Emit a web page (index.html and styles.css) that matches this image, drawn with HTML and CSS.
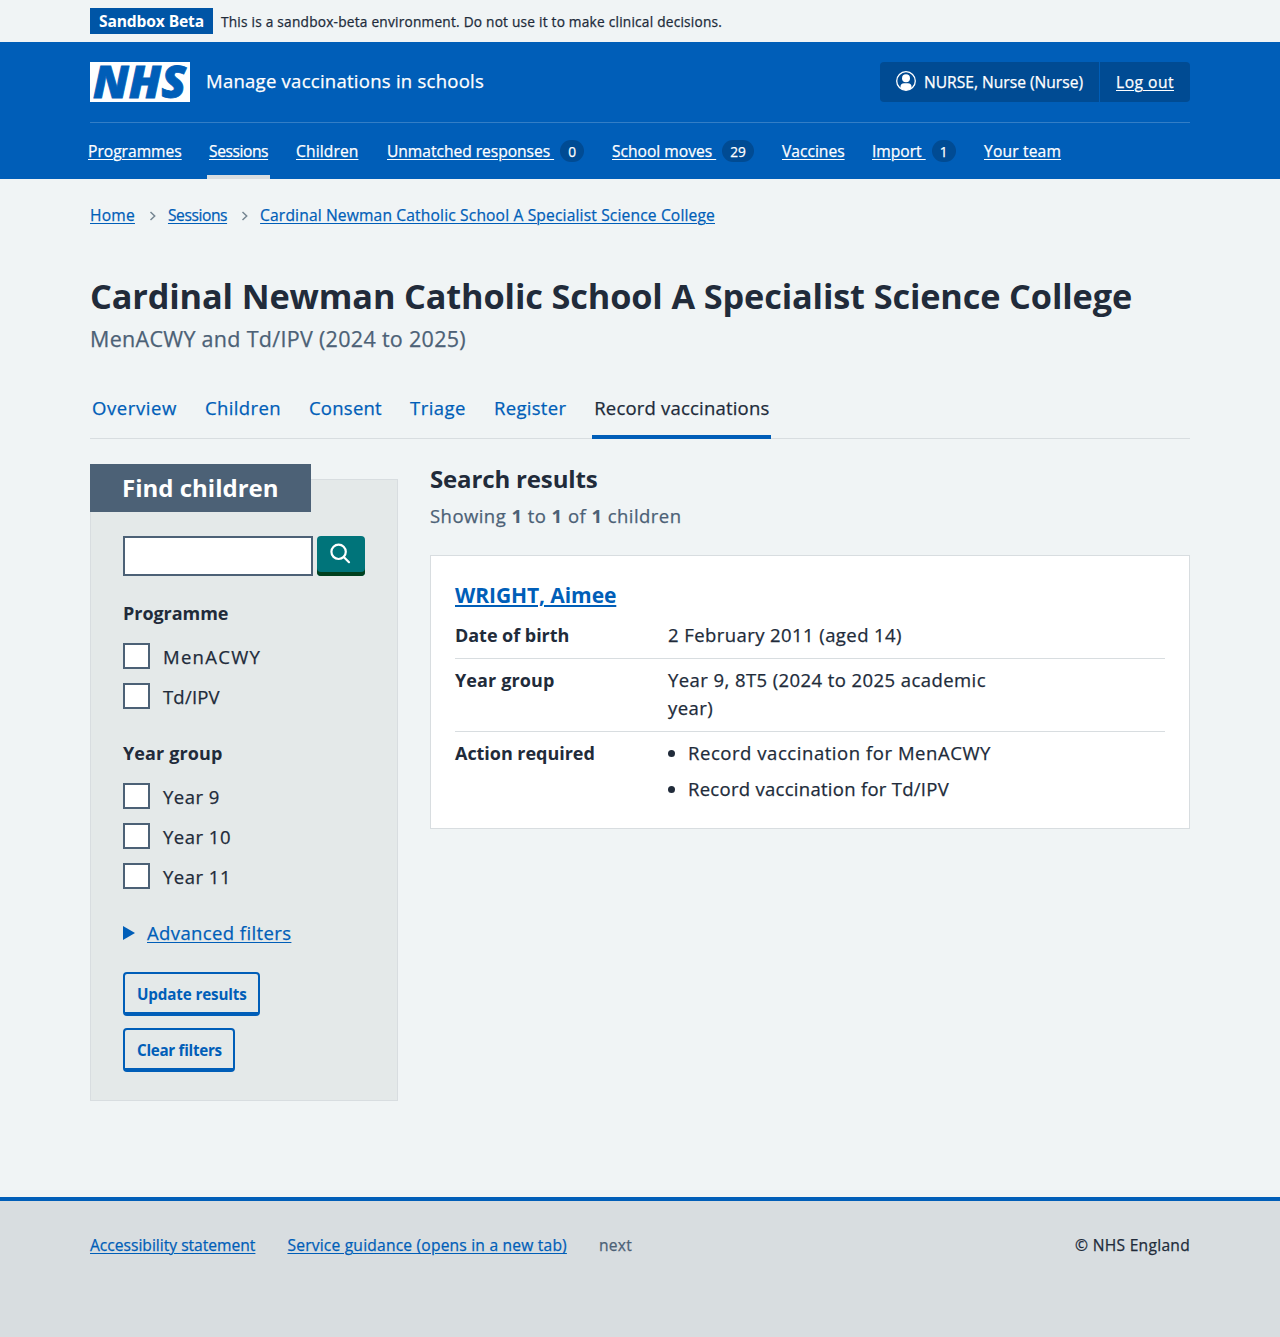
FILE: index.html
```html
<!DOCTYPE html>
<html lang="en">
<head>
<meta charset="utf-8">
<title>Record vaccinations – Manage vaccinations in schools</title>
<link rel="stylesheet" href="styles.css">
</head>
<body>
<div class="environment">
  <div class="container environment-inner">
    <strong class="environment-tag">Sandbox Beta</strong>
    <span class="environment-text">This is a sandbox-beta environment. Do not use it to make clinical decisions.</span>
  </div>
</div>
<header class="header">
  <div class="container">
    <div class="header-top">
      <svg class="logo" viewBox="0 0 100 40" role="img" aria-label="NHS">
        <rect width="100" height="40" fill="#fff"/>
        <text x="3" y="35.8" textLength="93" lengthAdjust="spacingAndGlyphs">NHS</text>
      </svg>
      <span class="service-name">Manage vaccinations in schools</span>
      <div class="account">
        <div class="account-item account-user">
          <svg class="user-icon" viewBox="0 0 20 20" aria-hidden="true">
            <circle cx="10" cy="10" r="9.3" fill="none" stroke="#fff" stroke-width="1.3"/>
            <circle cx="10" cy="7.3" r="4" fill="#fff"/>
            <path d="M4.5 17.3v-1.5a3.6 3.6 0 0 1 3.6-3.6h3.8a3.6 3.6 0 0 1 3.6 3.6v1.5A9 9 0 0 1 10 19.2a9 9 0 0 1-5.5-1.9Z" fill="#fff"/>
          </svg>
          <span>NURSE, Nurse (Nurse)</span>
        </div>
        <div class="account-item"><a class="logout" href="#">Log out</a></div>
      </div>
    </div>
    <nav class="nav">
      <div class="nav-item programmes"><a href="#">Programmes</a></div>
      <div class="nav-item current"><a href="#">Sessions</a></div>
      <div class="nav-item children"><a href="#">Children</a></div>
      <div class="nav-item unmatched"><a href="#">Unmatched responses&nbsp;</a><span class="count">0</span></div>
      <div class="nav-item moves"><a href="#">School moves&nbsp;</a><span class="count">29</span></div>
      <div class="nav-item vaccines"><a href="#">Vaccines</a></div>
      <div class="nav-item import"><a href="#">Import&nbsp;</a><span class="count">1</span></div>
      <div class="nav-item team"><a href="#">Your team</a></div>
    </nav>
  </div>
</header>
<div class="container page">
  <nav class="breadcrumb">
    <a class="crumb-home" href="#">Home</a>
    <svg class="chevron" viewBox="0 0 8 10" aria-hidden="true"><path d="M1.5 1 5.7 5 1.5 9"/></svg>
    <a class="crumb-sessions" href="#">Sessions</a>
    <svg class="chevron" viewBox="0 0 8 10" aria-hidden="true"><path d="M1.5 1 5.7 5 1.5 9"/></svg>
    <a class="crumb-school" href="#">Cardinal Newman Catholic School A Specialist Science College</a>
  </nav>
  <main>
    <h1>Cardinal Newman Catholic School A Specialist Science College</h1>
    <p class="caption">MenACWY and Td/IPV (2024 to 2025)</p>
    <nav class="tabs">
      <a class="tab-overview" href="#">Overview</a>
      <a class="tab-children" href="#">Children</a>
      <a class="tab-consent" href="#">Consent</a>
      <a class="tab-triage" href="#">Triage</a>
      <a class="tab-register" href="#">Register</a>
      <a class="selected" href="#">Record vaccinations</a>
    </nav>
    <div class="columns">
      <aside>
        <h2 class="filter-title">Find children</h2>
        <form class="filters">
          <div class="search">
            <input type="text" class="search-input" aria-label="Search">
            <button type="button" class="search-button" aria-label="Search">
              <svg viewBox="0 0 22 22" aria-hidden="true"><circle cx="9.6" cy="8.8" r="7.2"/><path d="m15 14.2 5 5"/></svg>
            </button>
          </div>
          <fieldset class="programme">
            <legend>Programme</legend>
            <label><input type="checkbox"><span class="menacwy">MenACWY</span></label>
            <label><input type="checkbox"><span class="tdipv">Td/IPV</span></label>
          </fieldset>
          <fieldset class="year-group">
            <legend>Year group</legend>
            <label><input type="checkbox"><span>Year 9</span></label>
            <label><input type="checkbox"><span>Year 10</span></label>
            <label><input type="checkbox"><span>Year 11</span></label>
          </fieldset>
          <a class="advanced" href="#"><i class="triangle"></i><span>Advanced filters</span></a>
          <button type="button" class="button">Update results</button>
          <button type="button" class="button clear">Clear filters</button>
        </form>
      </aside>
      <section class="results">
        <h2>Search results</h2>
        <p class="showing">Showing <b>1</b> to <b>1</b> of <b>1</b> children</p>
        <article class="card">
          <h3><a href="#">WRIGHT, Aimee</a></h3>
          <dl>
            <div class="row"><dt>Date of birth</dt><dd>2 February 2011 (aged 14)</dd></div>
            <div class="row"><dt class="short">Year group</dt><dd>Year 9, 8T5 (2024 to 2025 academic year)</dd></div>
            <div class="row"><dt>Action required</dt><dd><ul><li class="menacwy-action">Record vaccination for MenACWY</li><li>Record vaccination for Td/IPV</li></ul></dd></div>
          </dl>
        </article>
      </section>
    </div>
  </main>
</div>
<footer class="footer">
  <div class="container footer-inner">
    <a class="accessibility" href="#">Accessibility statement</a>
    <a class="guidance" href="#">Service guidance (opens in a new tab)</a>
    <span class="next">next</span>
    <span class="copyright">© NHS England</span>
  </div>
</footer>
</body>
</html>
```
FILE: styles.css
```css
* { box-sizing: border-box; }
body {
  margin: 0;
  background: #f0f4f5;
  color: #212b3a;
  font: 18.5px/28px "Open Sans", "Noto Sans", sans-serif;
  -webkit-text-stroke: .25px;
  white-space: nowrap;
}
.container { width: 1100px; margin: 0 auto; }
a { color: #005eb8; text-underline-offset: 2px; text-decoration-thickness: 1px; }
h1, h2, h3, p, dl, dd, ul { margin: 0; }
h1, h2, h3, dt, legend, strong, b, .button { -webkit-text-stroke: 0; }

/* Environment banner */
.environment-inner { height: 42px; display: flex; align-items: center; gap: 8px; }
.environment-tag { width: 123px; height: 26px; padding: 0 9px; background: #0055a6; color: #fff; font-size: 15.6px; line-height: 26px; letter-spacing: -.13px; }
.environment-text { font-size: 13.7px; line-height: 24px; letter-spacing: .22px; padding-top: 1px; }

/* Header */
.header { height: 137px; background: #005eb8; color: #fff; }
.header a { color: #fff; }
.header-top { height: 81px; padding-bottom: 1px; display: flex; align-items: center; border-bottom: 1px solid #337ec6; }
.logo { width: 100px; height: 40px; margin-right: 16px; overflow: visible; }
.logo text { font: italic 800 44px "Open Sans", sans-serif; fill: #005eb8; stroke: #005eb8; stroke-width: .8px; }
.service-name { position: relative; top: -1px; letter-spacing: .26px; }
.account { margin-left: auto; display: flex; height: 40px; border-radius: 4px; background: #004b93; font-size: 15.6px; line-height: 40px; }
.account-item { width: 90px; padding: 0 16px; }
.account-user { width: 220px; display: flex; align-items: center; gap: 8px; border-right: 1px solid #005eb8; }
.logout { letter-spacing: .5px; }
.user-icon { width: 20px; height: 20px; margin-top: -2px; flex: none; }
.nav { height: 56px; margin-left: -4px; display: flex; font-size: 15.6px; line-height: 56px; }
.nav-item { padding-left: 2px; display: flex; align-items: center; }
.nav-item a { line-height: 56px; }
.programmes { width: 121px; }
.children { width: 91px; letter-spacing: .12px; }
.unmatched { width: 225px; letter-spacing: -.03px; }
.moves { width: 170px; }
.vaccines { width: 90px; }
.import { width: 112px; }
.team { letter-spacing: .17px; }
.nav-item.current { width: 63px; margin-right: 24px; border-bottom: 4px solid #d8dde0; letter-spacing: -.42px; }
.current a { line-height: 52px; position: relative; top: 2px; }
.count { height: 22px; min-width: 24px; margin-left: 6px; padding: 0 8px; border-radius: 12px; background: #004b93; font-size: 13.7px; line-height: 23px; text-align: center; }

/* Page heading */
.page { height: 1018px; }
.breadcrumb { padding-top: 24px; height: 48px; display: flex; align-items: center; font-size: 15.6px; line-height: 24px; }
.crumb-home { letter-spacing: .22px; }
.crumb-sessions { letter-spacing: -.42px; }
.crumb-school { letter-spacing: .15px; }
.chevron { width: 8px; height: 10px; margin: 0 11px 0 14px; position: relative; top: 1px; fill: none; stroke: #768692; stroke-width: 1.5; }
h1 { margin-top: 47px; font-size: 34.3px; line-height: 44px; letter-spacing: -.14px; }
.caption { font-size: 21.5px; line-height: 32px; margin-top: 5px; color: #4c6176; letter-spacing: .3px; }
.tabs { margin-top: 24px; height: 60px; display: flex; border-bottom: 1px solid #d8dde0; line-height: 58px; }
.tabs a { height: 60px; padding: 0 2px; text-decoration: none; margin-right: 24px; }
.tab-overview { letter-spacing: .6px; }
.tab-children { letter-spacing: .37px; }
.tab-consent { letter-spacing: .25px; }
.tab-triage { letter-spacing: .48px; }
.tab-register { letter-spacing: .3px; }
.tabs .selected { color: #212b3a; border-bottom: 4px solid #005eb8; letter-spacing: .19px; }
.columns { margin-top: 25px; display: grid; grid-template-columns: 308px 760px; gap: 32px; align-items: start; }

/* Filters */
aside { position: relative; padding-top: 15px; }
.filter-title { position: absolute; left: 0; top: 0; width: 221px; height: 48px; padding-left: 32px; background: #4c6176; color: #fff; font-size: 24px; line-height: 48px; }
.filters { height: 622px; padding: 56px 32px 0; background: #e4e9e9; border: 1px solid #d8dde0; }
.search { display: flex; gap: 4px; }
.search-input { width: 190px; height: 40px; border: 2px solid #4c6176; background: #fff; }
.search-button { width: 48px; height: 40px; padding: 5px 12px 9px; border: 0; border-radius: 4px; background: #00747a; box-shadow: inset 0 -4px #00401e; }
.search-button svg { display: block; width: 22px; height: 22px; fill: none; stroke: #fff; stroke-width: 2.2; stroke-linecap: round; }
fieldset { margin: 23px 0 0; padding: 0; border: 0; }
.year-group { margin-top: 17px; }
legend { padding: 0; font-size: 18px; font-weight: 700; margin-bottom: 15px; letter-spacing: -.05px; }
.year-group legend { letter-spacing: .12px; }
label { height: 27px; margin-bottom: 13px; display: flex; align-items: center; gap: 13.3px; letter-spacing: .5px; }
label span { position: relative; top: 1px; }
.menacwy { letter-spacing: 1.3px; }
.tdipv { letter-spacing: .2px; }
input[type="checkbox"] { appearance: none; width: 26.7px; height: 26.7px; margin: 1px 0 0; background: #fff; border: 2px solid #4c6176; }
.advanced { margin: 17px 0 25px; display: flex; align-items: center; text-decoration: none; letter-spacing: .39px; }
.advanced span { text-decoration: underline; text-decoration-thickness: 1px; margin-left: 12px; }
.triangle { border: solid transparent; border-width: 7px 0 7px 12px; border-left-color: #005eb8; }
.button { display: block; width: 137px; height: 44px; margin-bottom: 12px; padding: 1px 0 0 12px; text-align: left; border: 2px solid #005eb8; border-bottom-width: 4px; border-radius: 4px; background: transparent; color: #005eb8; font: 700 15.2px/38px "Open Sans", sans-serif; letter-spacing: -.14px; }
.clear { width: 112px; letter-spacing: -.28px; }

/* Results */
.results h2 { font-size: 24px; line-height: 32px; margin-top: -1px; letter-spacing: -.15px; }
.showing { margin-top: 7px; color: #4c6176; letter-spacing: .45px; }
.card { margin-top: 25px; height: 274px; padding: 23px 24px; background: #fff; border: 1px solid #d8dde0; }
.card h3 { font-size: 21px; line-height: 32px; margin-bottom: 2px; letter-spacing: -.08px; }
.card h3 a { text-decoration-thickness: 2px; }
.row { display: grid; grid-template-columns: 213px 340px; padding: 7px 0 9px; border-bottom: 1px solid #d8dde0; }
.row:first-child { padding-top: 8px; }
.row dd { white-space: normal; letter-spacing: .42px; }
.row:last-child { border: 0; }
dt { font-size: 18px; font-weight: 700; letter-spacing: -.04px; }
dt.short { letter-spacing: .12px; }
ul { padding-left: 20px; }
li { margin-bottom: 8px; letter-spacing: .28px; }
.menacwy-action { letter-spacing: .55px; }

/* Footer */
.footer { height: 140px; padding-top: 32px; background: #d8dde0; border-top: 4px solid #005eb8; }
.footer-inner { display: flex; font-size: 15.6px; line-height: 24px; }
.footer a { margin-right: 32px; }
.guidance { letter-spacing: .2px; }
.next { color: #4c6176; letter-spacing: .3px; }
.copyright { margin-left: auto; letter-spacing: .28px; }
```
